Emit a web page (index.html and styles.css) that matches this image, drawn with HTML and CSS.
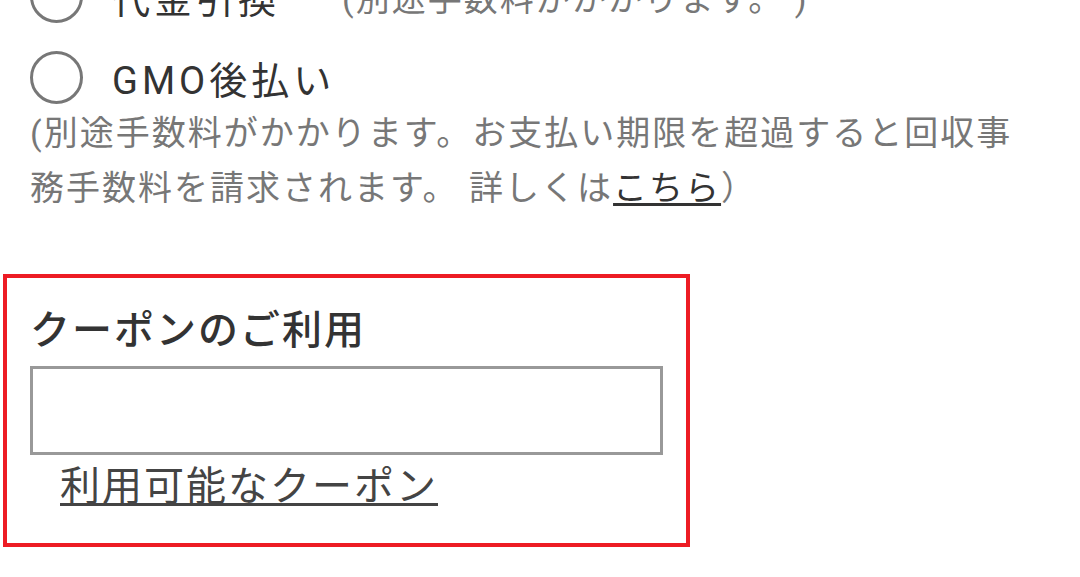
FILE: index.html
```html
<!DOCTYPE html>
<html lang="ja">
<head>
    <meta charset="UTF-8">
    <meta name="viewport" content="width=device-width, initial-scale=1.0">
    <title>お支払い方法</title>
    <link rel="stylesheet" href="styles.css">
</head>
<body>
    <div class="page">
        <div class="payment-list">
            <label class="radio-row">
                <input type="radio" name="payment" value="cod">
                <span class="radio-mark"></span>
                <span class="radio-label">代金引換</span>
                <span class="radio-note">(別途手数料がかかります。 )</span>
            </label>
            <label class="radio-row">
                <input type="radio" name="payment" value="gmo">
                <span class="radio-mark"></span>
                <span class="radio-label">GMO後払い</span>
            </label>
        </div>
        <p class="payment-note">(別途手数料がかかります。お支払い期限を超過すると回収事務手数料を請求されます。 詳しくは<a href="#">こちら</a>）</p>

        <div class="coupon-box">
            <h2 class="coupon-title">クーポンのご利用</h2>
            <input type="text" class="coupon-input" name="coupon">
            <a href="#" class="coupon-link">利用可能なクーポン</a>
        </div>
    </div>
</body>
</html>
```

FILE: styles.css
```css
* {
    margin: 0;
    padding: 0;
    box-sizing: border-box;
}

body {
    font-family: Roboto, "Noto Sans CJK JP", sans-serif;
    background: #fff;
    color: #333;
    overflow: hidden;
}

.page {
    margin-top: -30px;
    padding: 0 30px;
}

.payment-list {
    display: flex;
    flex-direction: column;
    gap: 28px;
}

.radio-row {
    display: flex;
    align-items: center;
    height: 53px;
    cursor: pointer;
}

.radio-row input {
    display: none;
}

.radio-mark {
    flex: none;
    width: 53px;
    height: 53px;
    border: 3px solid #777;
    border-radius: 50%;
    margin-right: 29px;
}

.radio-label {
    font-size: 38px;
    letter-spacing: 4px;
    color: #333;
    white-space: nowrap;
}

.radio-note {
    margin-left: 62px;
    font-size: 34px;
    letter-spacing: 2px;
    color: #777;
    white-space: nowrap;
}

.payment-note {
    margin-top: 2px;
    font-size: 34px;
    line-height: 55px;
    letter-spacing: 2px;
    color: #777;
    max-width: 1010px;
}

.payment-note a {
    color: #333;
    text-decoration: underline;
    text-decoration-thickness: 3px;
    text-underline-offset: 3px;
}

.coupon-box {
    margin: 58px 0 0 -27px;
    width: 687px;
    border: 4px solid #ed1c24;
    padding: 29px 23px 32px;
}

.coupon-title {
    font-size: 40px;
    font-weight: 500;
    line-height: 1.2;
    letter-spacing: 2px;
    color: #333;
}

.coupon-input {
    display: block;
    width: 100%;
    height: 89px;
    margin-top: 11px;
    border: 3px solid #999;
    background: #fff;
    font-size: 32px;
    padding: 0 12px;
    outline: none;
}

.coupon-link {
    display: inline-block;
    margin: 8px 0 0 30px;
    font-size: 40px;
    line-height: 1.2;
    letter-spacing: 2px;
    color: #444;
    text-decoration: underline;
    text-decoration-thickness: 3px;
    text-underline-offset: 3px;
}
```
